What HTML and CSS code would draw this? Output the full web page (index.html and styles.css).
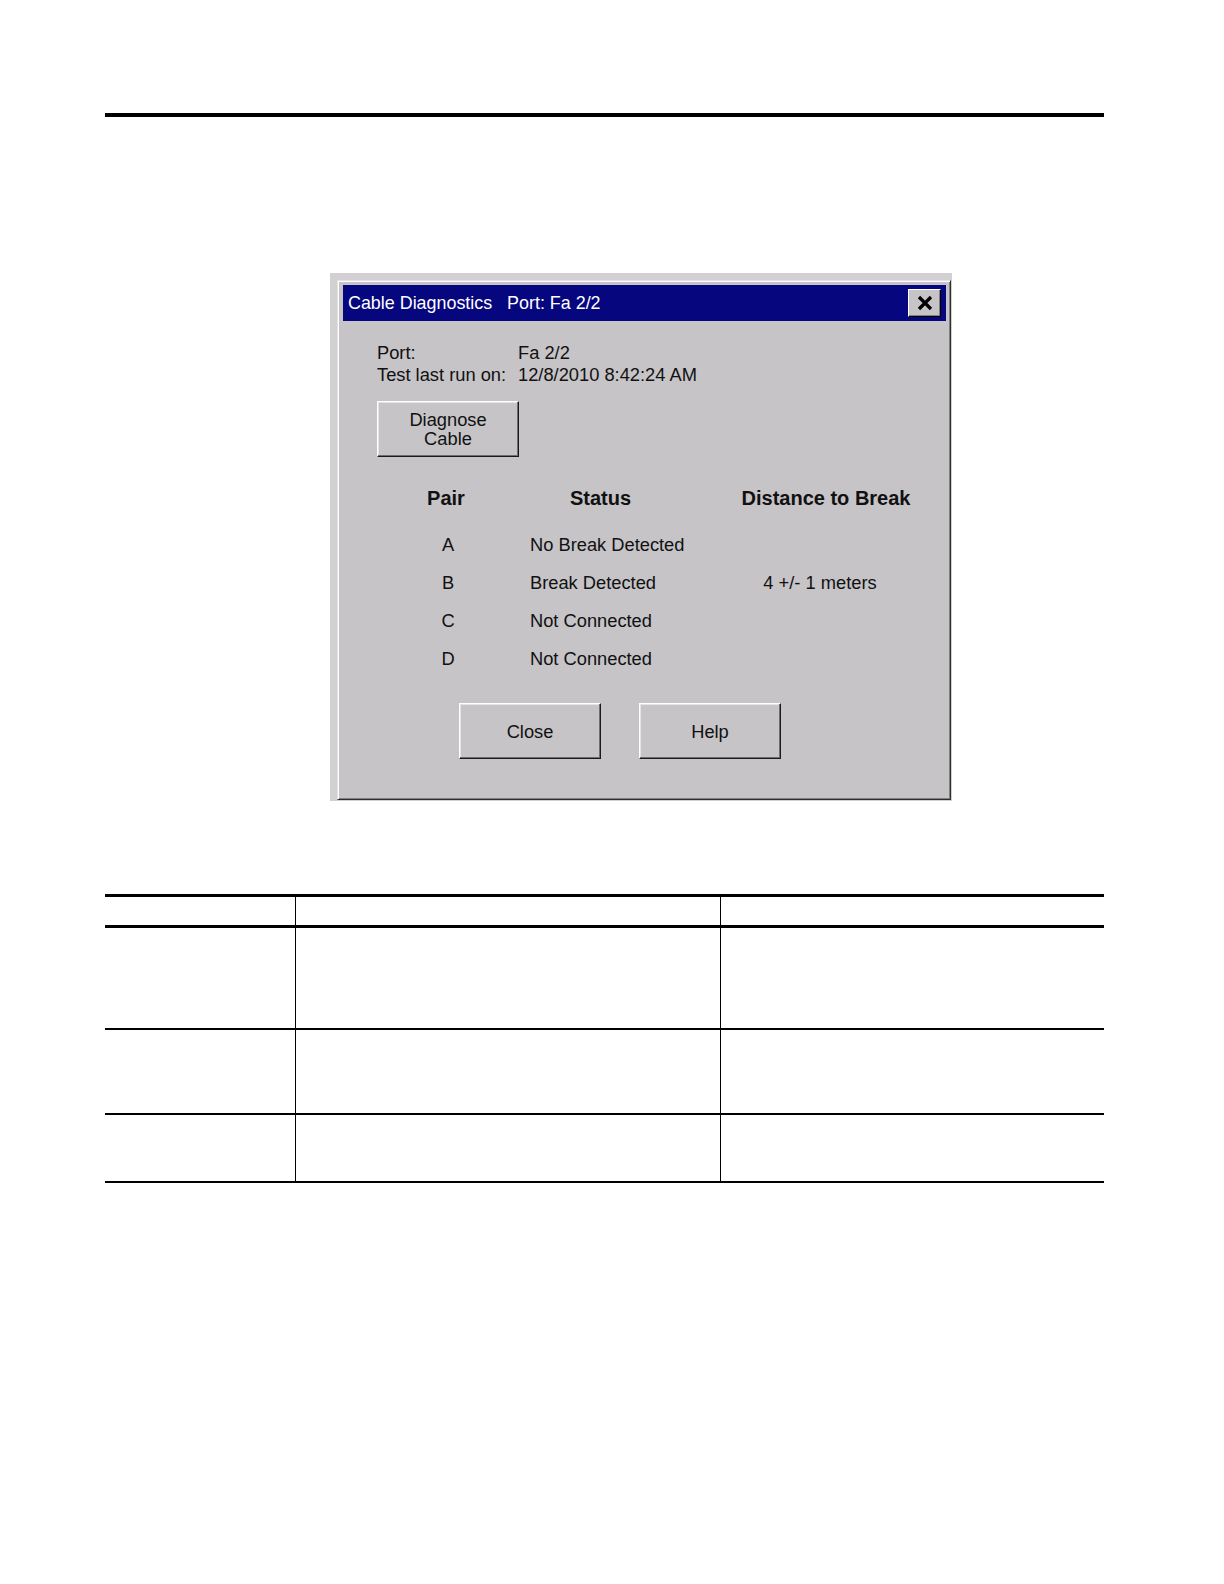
FILE: index.html
```html
<!DOCTYPE html>
<html>
<head>
<meta charset="utf-8">
<title>Cable Diagnostics</title>
<link rel="stylesheet" href="styles.css">
</head>
<body>
<div class="page">
  <div class="rule"></div>

  <div class="shot">
    <div class="window">
      <div class="titlebar">
        <span class="title">Cable Diagnostics&nbsp;&nbsp; Port: Fa 2/2</span>
        <span class="xbtn">
          <svg width="18" height="16" viewBox="0 0 18 16"><path d="M3 2 L15 14 M15 2 L3 14" stroke="#000" stroke-width="3.2" fill="none"/></svg>
        </span>
      </div>
      <div class="wbody">
        <div class="info">
          <span>Port:</span><span>Fa 2/2</span>
          <span>Test last run on:</span><span>12/8/2010 8:42:24 AM</span>
        </div>
        <div class="btn diag">Diagnose<br>Cable</div>
        <div class="results">
          <div class="hd c1">Pair</div>
          <div class="hd c2">Status</div>
          <div class="hd c3">Distance to Break</div>

          <div class="cell c1">A</div>
          <div class="cell c2">No Break Detected</div>
          <div class="cell c3"></div>

          <div class="cell c1">B</div>
          <div class="cell c2">Break Detected</div>
          <div class="cell c3">4 +/- 1 meters</div>

          <div class="cell c1">C</div>
          <div class="cell c2">Not Connected</div>
          <div class="cell c3"></div>

          <div class="cell c1">D</div>
          <div class="cell c2">Not Connected</div>
          <div class="cell c3"></div>
        </div>
        <div class="actions">
          <div class="btn">Close</div>
          <div class="btn">Help</div>
        </div>
      </div>
    </div>
  </div>

  <div class="table">
    <div class="trow thead">
      <div class="tc"></div><div class="tc"></div><div class="tc"></div>
    </div>
    <div class="trow r1">
      <div class="tc"></div><div class="tc"></div><div class="tc"></div>
    </div>
    <div class="trow r2">
      <div class="tc"></div><div class="tc"></div><div class="tc"></div>
    </div>
    <div class="trow r3">
      <div class="tc"></div><div class="tc"></div><div class="tc"></div>
    </div>
  </div>
</div>
</body>
</html>
```

FILE: styles.css
```css
html, body {
  margin: 0;
  padding: 0;
  background: #ffffff;
}

.page {
  width: 999px;
  padding-left: 105px;
  font-family: "Liberation Sans", Arial, sans-serif;
}

.rule {
  margin-top: 113px;
  height: 4px;
  background: #000;
}

.shot {
  margin-top: 156px;
  margin-left: 225px;
  width: 622px;
  height: 528px;
  box-sizing: border-box;
  padding: 7px 1px 1px 7px;
  background: #d2d0d3;
}

.window {
  width: 614px;
  height: 520px;
  box-sizing: border-box;
  background: #c6c4c7;
  border: 1px solid;
  border-color: #e2e1e3 #2e2e2e #2e2e2e #e2e1e3;
  box-shadow: inset 1px 1px 0 #ffffff, inset -1px -1px 0 #808080;
  padding: 4px 4px 0 5px;
}

.titlebar {
  height: 36px;
  background: #06067f;
  display: flex;
  align-items: center;
  justify-content: space-between;
  padding: 0 5px 0 5px;
}

.title {
  color: #ffffff;
  font-size: 17.9px;
  white-space: pre;
}

.xbtn {
  width: 33px;
  height: 28px;
  box-sizing: border-box;
  background: #c6c4c7;
  border: 1px solid;
  border-color: #ffffff #000000 #000000 #ffffff;
  box-shadow: inset -1px -1px 0 #808080;
  display: flex;
  align-items: center;
  justify-content: center;
}

.wbody {
  height: 478px;
  box-sizing: border-box;
  padding: 21px 0 0 34px;
  color: #111;
  font-size: 18.3px;
}

.info {
  display: grid;
  grid-template-columns: 141px auto;
  line-height: 22px;
  white-space: nowrap;
}

.btn {
  width: 142px;
  height: 56px;
  box-sizing: border-box;
  background: #c6c4c7;
  border: 1px solid;
  border-color: #ffffff #1a1a1a #1a1a1a #ffffff;
  box-shadow: inset -1px -1px 0 #6e6e6e, inset 1px 1px 0 #e4e4e4;
  display: flex;
  align-items: center;
  justify-content: center;
  text-align: center;
  line-height: 19px;
}

.diag {
  margin-top: 15px;
}

.results {
  margin-top: 30px;
  margin-left: 31px;
  display: grid;
  grid-template-columns: 80px 224px 228px;
  grid-template-rows: 22px 17px repeat(4, 38px);
  white-space: nowrap;
}

.hd {
  font-weight: bold;
  font-size: 20px;
  line-height: 22px;
  grid-row: 1;
}

.hd.c1 { text-align: center; padding-right: 4px; }
.hd.c2 { padding-left: 82px; }
.hd.c3 { text-align: center; }

.cell {
  line-height: 38px;
}

.results .cell:nth-child(n+4):nth-child(-n+6) { grid-row: 3; }
.results .cell:nth-child(n+7):nth-child(-n+9) { grid-row: 4; }
.results .cell:nth-child(n+10):nth-child(-n+12) { grid-row: 5; }
.results .cell:nth-child(n+13):nth-child(-n+15) { grid-row: 6; }

.cell.c1 { text-align: center; }
.cell.c2 { padding-left: 42px; }
.cell.c3 { text-align: center; padding-right: 12px; }

.actions {
  margin-top: 25px;
  margin-left: 82px;
  display: flex;
  gap: 38px;
}

.table {
  margin-top: 93px;
  width: 999px;
  border-top: 3px solid #000;
}

.trow {
  display: grid;
  grid-template-columns: 190px 425px 1fr;
  border-bottom: 2px solid #000;
}

.thead {
  height: 28px;
  border-bottom-width: 3px;
}

.r1 { height: 100px; }
.r2 { height: 83px; }
.r3 { height: 66px; }

.tc + .tc {
  border-left: 1px solid #000;
}
```
